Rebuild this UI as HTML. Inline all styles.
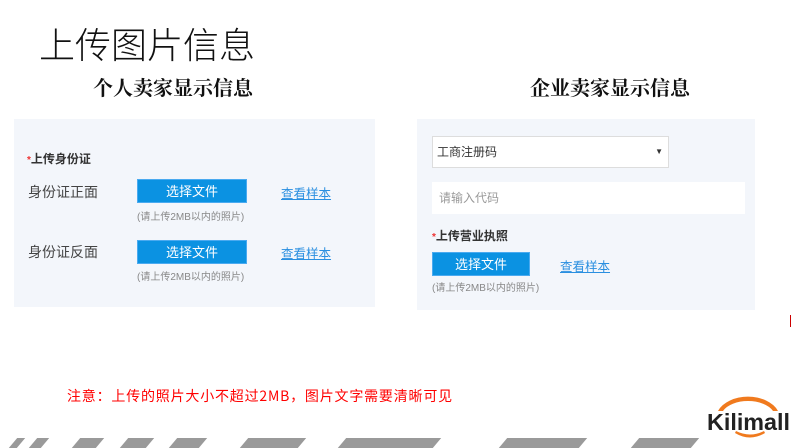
<!DOCTYPE html>
<html><head><meta charset="utf-8"><style>
*{margin:0;padding:0;box-sizing:border-box}
body{width:797px;height:447px;background:#fff;position:relative;overflow:hidden;font-family:"Liberation Sans","Noto Sans CJK SC",sans-serif}
.a{position:absolute;white-space:nowrap}
.panel{position:absolute;background:#f3f6fb}
.btn{position:absolute;background:#0b92e2;color:#fff;font-size:13px;text-align:center;line-height:23px;border:1px solid #4aaaf0}
.hint{font-size:10px;color:#888}
.link{font-size:12.5px;color:#2a8fe0;text-decoration:underline}
.lbl{font-size:14px;color:#444}
.req{font-size:12px;font-weight:bold;color:#333}
.req b{color:#e33;font-size:10px}
.sub{font-family:"Noto Serif CJK SC",serif;font-weight:bold;font-size:20px;color:#111}
.stripe{position:absolute;top:438px;height:10px;background:#9a9a9a;transform:skewX(-40deg)}
</style></head><body>
<div class="a" style="left:39px;top:20px;font-size:36px;line-height:46px;color:#111;font-family:'Noto Sans CJK SC',sans-serif;font-weight:300">上传图片信息</div>
<div class="a sub" style="left:93px;top:72px">个人卖家显示信息</div>
<div class="a sub" style="left:530px;top:72px">企业卖家显示信息</div>

<div class="panel" style="left:14px;top:119px;width:361px;height:188px"></div>
<div class="a req" style="left:27px;top:150px"><b>*</b>上传身份证</div>
<div class="a lbl" style="left:28px;top:182px">身份证正面</div>
<div class="btn" style="left:137px;top:179px;width:110px;height:24px">选择文件</div>
<div class="a hint" style="left:137px;top:208px">(请上传2MB以内的照片)</div>
<div class="a link" style="left:281px;top:183px">查看样本</div>
<div class="a lbl" style="left:28px;top:242px">身份证反面</div>
<div class="btn" style="left:137px;top:240px;width:110px;height:24px">选择文件</div>
<div class="a hint" style="left:137px;top:268px">(请上传2MB以内的照片)</div>
<div class="a link" style="left:281px;top:243px">查看样本</div>

<div class="panel" style="left:417px;top:119px;width:338px;height:191px"></div>
<div class="a" style="left:432px;top:136px;width:237px;height:32px;background:#fff;border:1px solid #ddd;font-size:12px;color:#333;line-height:30px;padding-left:4px">工商注册码<span style="position:absolute;right:5px;font-size:8px">▼</span></div>
<div class="a" style="left:432px;top:182px;width:313px;height:32px;background:#fff;font-size:12px;color:#999;line-height:32px;padding-left:7px">请输入代码</div>
<div class="a req" style="left:432px;top:227px"><b>*</b>上传营业执照</div>
<div class="btn" style="left:432px;top:252px;width:98px;height:24px">选择文件</div>
<div class="a link" style="left:560px;top:256px">查看样本</div>
<div class="a hint" style="left:432px;top:279px">(请上传2MB以内的照片)</div>

<div class="a" style="left:790px;top:315px;width:1px;height:12px;background:#c00"></div>
<div class="a" style="left:67px;top:386px;font-size:14px;color:#f00;font-family:'Noto Sans CJK SC',sans-serif;letter-spacing:0.8px">注意：上传的照片大小不超过2MB，图片文字需要清晰可见</div>

<svg class="a" style="left:700px;top:385px" width="97" height="62" viewBox="0 0 97 62">
<path d="M18 26 A32 22 0 0 1 78 26 L73 26 A27 16 0 0 0 23 26Z" fill="#f07a1e"/>
<path d="M35 48 Q50 57 65 48 L64 46 Q50 53 36 46Z" fill="#f07a1e"/>
<text x="7" y="45" font-family="Liberation Sans,sans-serif" font-weight="bold" font-size="23" fill="#222" textLength="83" lengthAdjust="spacingAndGlyphs">Kilimall</text>
</svg>

<div class="stripe" style="left:13px;width:8px"></div>
<div class="stripe" style="left:33px;width:12px"></div>
<div class="stripe" style="left:76px;width:24px"></div>
<div class="stripe" style="left:124px;width:26px"></div>
<div class="stripe" style="left:173px;width:30px"></div>
<div class="stripe" style="left:244px;width:58px"></div>
<div class="stripe" style="left:342px;width:95px"></div>
<div class="stripe" style="left:503px;width:80px"></div>
<div class="stripe" style="left:635px;width:60px"></div>
</body></html>
